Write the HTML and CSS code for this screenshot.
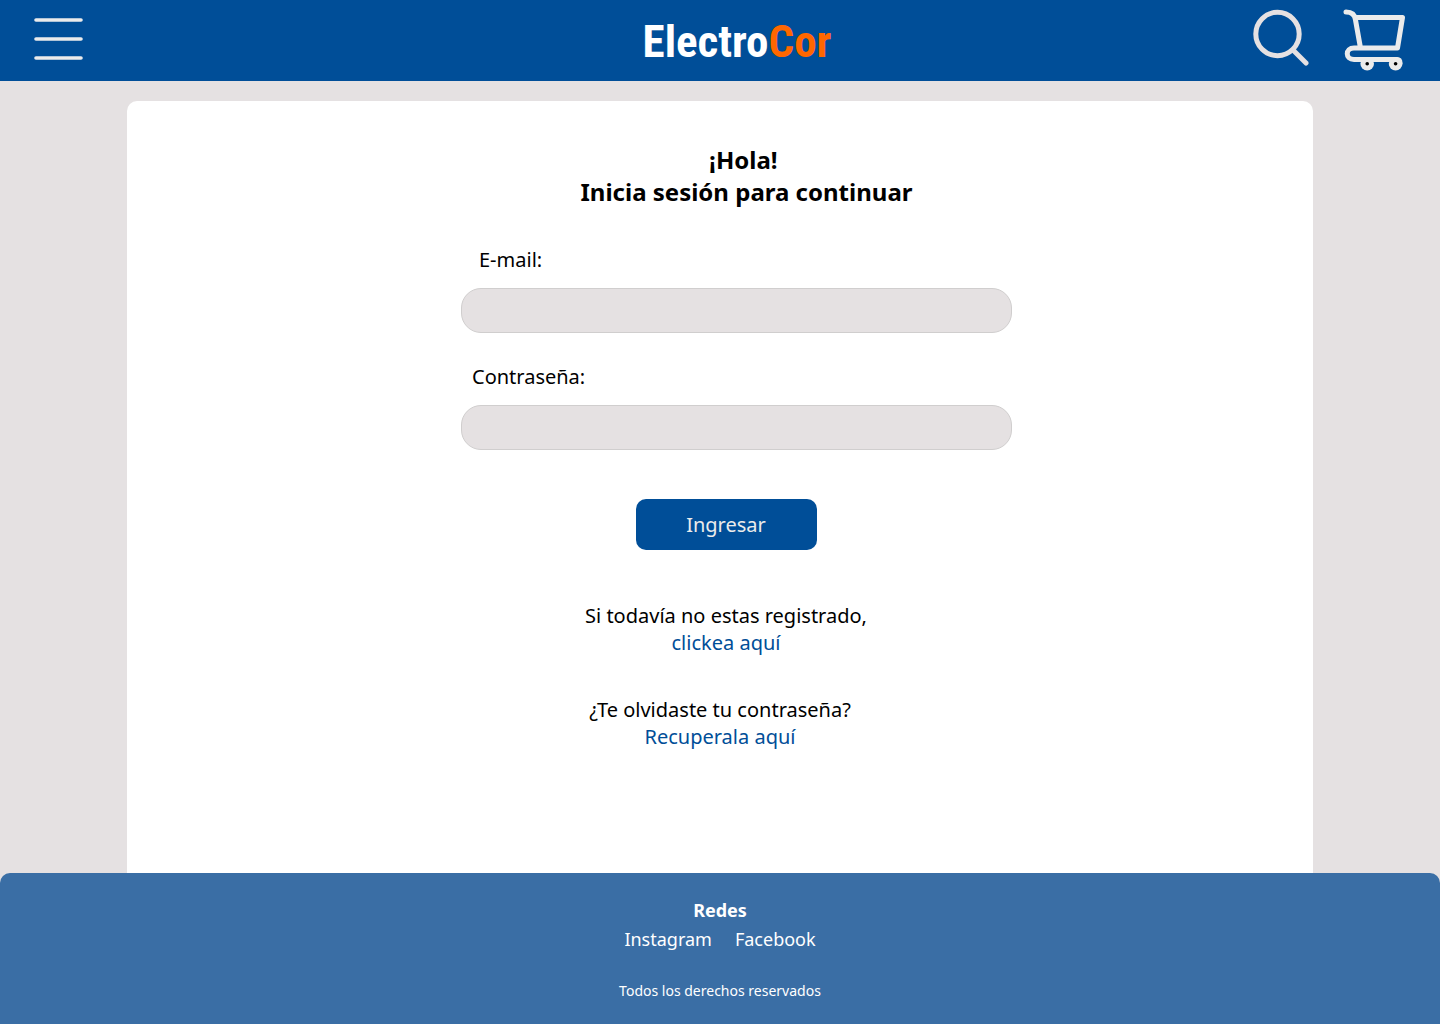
FILE: index.html
```html
<!DOCTYPE html>
<html lang="es">
<head>
  <meta charset="utf-8">
  <meta name="viewport" content="width=device-width, initial-scale=1">
  <title>ElectroCor - Iniciar sesión</title>
  <link rel="stylesheet" href="styles.css">
</head>
<body>
  <header class="header">
    <button class="icon-button header__menu" type="button" aria-label="Menú">
      <svg width="49" height="42" viewBox="0 0 49 42" fill="none" stroke="currentColor" stroke-width="3.6" stroke-linecap="round">
        <path d="M2 2H47M2 21H47M2 40H47"/>
      </svg>
    </button>
    <a class="logo" href="#">Electro<span class="logo__accent">Cor</span></a>
    <div class="header__actions">
      <button class="icon-button" type="button" aria-label="Buscar">
        <svg width="56" height="57" viewBox="0 0 56 57" fill="none" stroke="#e5e1e2" stroke-width="5" stroke-linecap="round">
          <circle cx="24.5" cy="25" r="21.7"/>
          <path d="M41 42L53 54"/>
        </svg>
      </button>
      <button class="icon-button" type="button" aria-label="Carrito">
        <svg width="63" height="62" viewBox="0 0 63 62" fill="none" stroke="currentColor" stroke-width="5" stroke-linecap="round" stroke-linejoin="round">
          <path d="M3 3C9 3 12 6 12.500 11L17.500 39M12 8.500H59.500L54.500 39H11C2 39 2 50.500 11 50.500H54Q57 50.500 57 54"/>
          <circle cx="24.200" cy="54.800" r="6.800" fill="currentColor" stroke="none"/>
          <circle cx="52.600" cy="54.800" r="6.800" fill="currentColor" stroke="none"/>
          <circle cx="24.200" cy="54.800" r="1.800" fill="#000" stroke="none"/>
          <circle cx="52.600" cy="54.800" r="1.800" fill="#000" stroke="none"/>
        </svg>
      </button>
    </div>
  </header>

  <main class="main">
    <form class="card">
      <h1 class="card__title">¡Hola!&nbsp;<br>Inicia sesión para continuar</h1>
      <div class="fields">
        <div class="field">
          <label class="field__label field__label--inset" for="email">E-mail:</label>
          <input class="field__input" id="email" type="email">
        </div>
        <div class="field">
          <label class="field__label" for="password">Contraseña:</label>
          <input class="field__input" id="password" type="password">
        </div>
      </div>
      <div class="submit">
        <button class="submit__button" type="submit">Ingresar</button>
        <p class="note">Si todavía no estas registrado,<br><a class="link" href="#">clickea aquí</a></p>
      </div>
      <p class="note">¿Te olvidaste tu contraseña?<br><a class="link" href="#">Recuperala aquí</a></p>
    </form>
  </main>

  <footer class="footer">
    <h2 class="footer__title">Redes</h2>
    <nav class="footer__links" aria-label="Redes">
      <a class="footer__link" href="#">Instagram</a>
      <a class="footer__link" href="#">Facebook</a>
    </nav>
    <p class="footer__legal">Todos los derechos reservados</p>
  </footer>
</body>
</html>
```

FILE: styles.css
```css
* {
  box-sizing: border-box;
}

body {
  display: flex;
  flex-direction: column;
  min-height: 100vh;
  margin: 0;
  background: #e5e1e2;
  color: #000;
  font-family: "Noto Sans", sans-serif;
  font-size: 20px;
  line-height: 27px;
}

h1,
h2,
p {
  margin: 0;
}

a {
  text-decoration: none;
}

svg {
  display: block;
}

.header {
  display: grid;
  grid-template-columns: 1fr auto 1fr;
  align-items: start;
  height: 81px;
  padding: 0 34px;
  background: #004e98;
  color: #ebebeb;
}

.icon-button {
  padding: 0;
  border: 0;
  background: none;
  color: inherit;
  cursor: pointer;
}

.header__menu {
  justify-self: start;
  padding-top: 18px;
}

.header__actions {
  display: flex;
  align-items: flex-start;
  justify-self: end;
  gap: 34px;
  padding-top: 9px;
}

.logo {
  padding-left: 34px;
  color: #fff;
  font-family: "Roboto Condensed", Roboto, sans-serif;
  font-size: 45px;
  font-weight: 700;
  line-height: 84px;
}

.logo__accent {
  color: #ff6700;
}

.main {
  display: flex;
  flex: 1;
  padding: 20px 127px 0;
}

.card {
  display: flex;
  flex: 1;
  flex-direction: column;
  align-items: center;
  padding: 43px 0;
  border-radius: 10px 10px 0 0;
  background: #fff;
}

.card__title {
  padding-left: 53px;
  font-size: 24px;
  font-weight: 700;
  line-height: 32px;
  text-align: center;
}

.fields {
  display: flex;
  flex-direction: column;
  gap: 30px;
  width: 100%;
  max-width: 584px;
  margin-top: 38px;
  padding-left: 33px;
}

.field {
  display: flex;
  flex-direction: column;
  gap: 15px;
}

.field__label {
  padding-left: 11px;
}

.field__label--inset {
  padding-left: 18px;
}

.field__input {
  width: 100%;
  height: 45px;
  padding: 0 16px;
  border: 1px solid #d0cece;
  border-radius: 20px;
  background: #e5e1e2;
  font: inherit;
}

.submit {
  display: flex;
  flex-direction: column;
  align-items: center;
  gap: 52px;
  margin: 49px 0 40px;
  padding-left: 12px;
}

.submit__button {
  width: 181px;
  height: 51px;
  border: 0;
  border-radius: 10px;
  background: #004e98;
  color: #ebebeb;
  font: inherit;
  cursor: pointer;
}

.note {
  text-align: center;
}

.link {
  color: #004e98;
}

.footer {
  display: flex;
  flex-direction: column;
  align-items: center;
  padding: 25px 20px 23px;
  border-radius: 10px 10px 0 0;
  background: #3a6ea5;
  color: #fff;
  font-size: 18px;
  line-height: 24px;
}

.footer__title {
  font-size: 18px;
  font-weight: 700;
}

.footer__links {
  display: flex;
  gap: 23px;
  margin: 5px 0 30px;
}

.footer__link {
  color: #fff;
}

.footer__legal {
  font-size: 14px;
  line-height: 20px;
}
```
